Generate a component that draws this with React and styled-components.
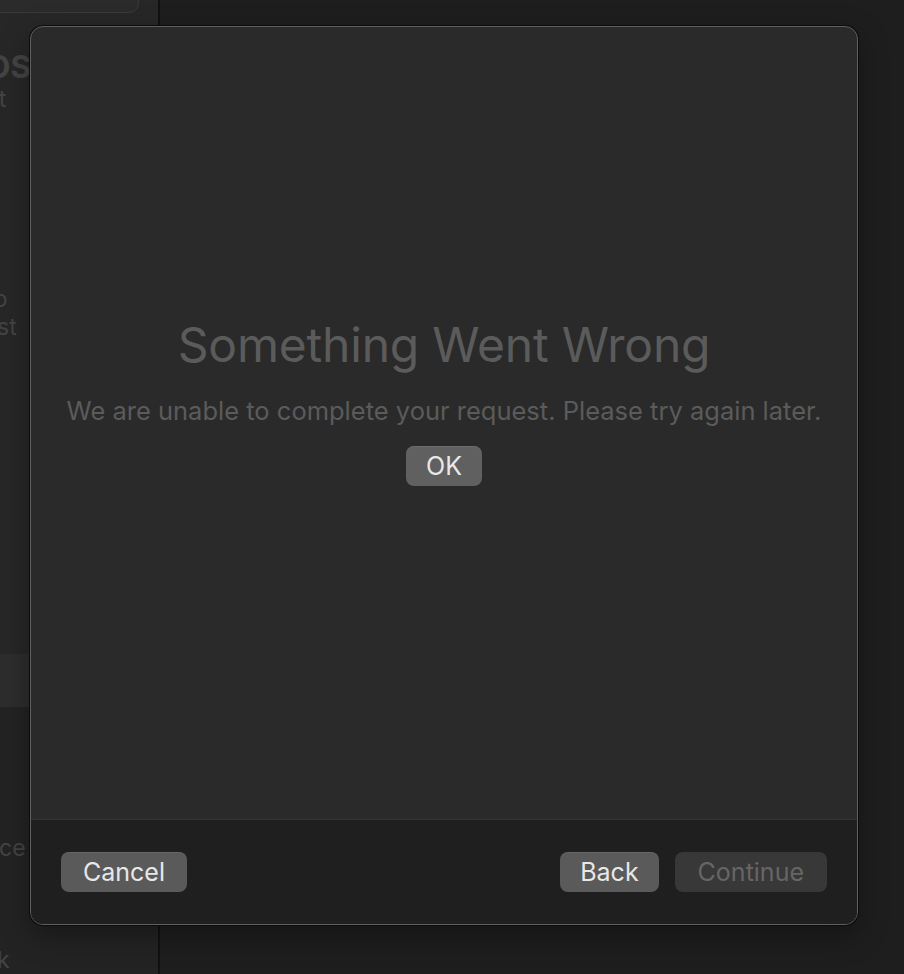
import React from 'react';
import styled, { createGlobalStyle } from 'styled-components';

const GlobalStyle = createGlobalStyle`
  html, body {
    margin: 0;
    padding: 0;
    background: #1e1e1e;
    font-family: Inter, "Noto Sans", "Liberation Sans", sans-serif;
  }
`;

const Page = styled.div`
  position: relative;
  display: flex;
  width: 904px;
  height: 974px;
  overflow: hidden;
  background: #1e1e1e;
`;

const Sidebar = styled.aside`
  display: flex;
  flex-direction: column;
  width: 158px;
  flex-shrink: 0;
  background: #272727;
  border-right: 2px solid #111111;
  overflow: hidden;
`;

const SearchField = styled.div`
  height: 34px;
  margin: -21px 19px 0 -20px;
  border: 1px solid #3a3a3a;
  border-radius: 10px;
  background: #2b2b2b;
`;

const Group = styled.div`
  display: flex;
  flex-direction: column;
  margin-top: ${props => props.top || '0'};
`;

const GroupTitle = styled.span`
  margin-left: ${props => props.shift || '0'};
  font-size: 31px;
  font-weight: 700;
  line-height: 36px;
  color: #444444;
  white-space: nowrap;
`;

const GroupLine = styled.span`
  margin-left: ${props => props.shift || '0'};
  font-size: 23px;
  line-height: 28px;
  color: #444444;
  white-space: nowrap;
`;

const SelectedRow = styled.div`
  height: 55px;
  margin-top: ${props => props.top};
  background: #2d2d2d;
`;

const LowerPane = styled.div`
  flex: 1;
  display: flex;
  flex-direction: column;
  background: #232323;
`;

const Main = styled.main`
  flex: 1;
  background: #1e1e1e;
`;

const Backdrop = styled.div`
  position: absolute;
  inset: 0;
  padding: 26px 46px 49px 30px;
  display: flex;
`;

const Sheet = styled.section`
  flex: 1;
  display: flex;
  flex-direction: column;
  border: 1.5px solid #5f5f5f;
  border-radius: 13px;
  overflow: hidden;
  background: #2a2a2a;
  box-shadow: 0 0 0 1px #0c0c0c, 0 10px 30px rgba(0, 0, 0, 0.35);
`;

const Body = styled.div`
  flex: 1;
  display: flex;
  flex-direction: column;
  align-items: center;
  padding-top: 290px;
`;

const Title = styled.h1`
  margin: 0;
  font-size: 48px;
  font-weight: 400;
  line-height: 56px;
  letter-spacing: -0.2px;
  color: #5b5b5b;
`;

const Message = styled.p`
  margin: 23px 0 0;
  font-size: 25.5px;
  line-height: 30px;
  color: #5b5b5b;
  white-space: nowrap;
`;

const Button = styled.button`
  height: 40px;
  padding: 0 ${props => props.pad || '22px'};
  border: none;
  border-radius: 8px;
  background: ${props => (props.disabled ? '#383838' : props.bright ? '#606060' : '#5a5a5a')};
  color: ${props => (props.disabled ? '#666666' : '#e8e8e8')};
  font-family: inherit;
  font-size: 25px;
  line-height: 40px;
  box-shadow: ${props => (props.disabled ? 'none' : 'inset 0 1px 0 rgba(255,255,255,0.08)')};
`;

const OkRow = styled.div`
  margin-top: 20px;
`;

const Footer = styled.footer`
  height: 105px;
  display: flex;
  align-items: center;
  justify-content: space-between;
  padding: 0 30px;
  background: #1f1f1f;
  border-top: 1.5px solid #343434;
  box-sizing: border-box;
`;

const ButtonGroup = styled.div`
  display: flex;
  gap: 16px;
`;

export default function App() {
  return (
    <>
      <GlobalStyle />
      <Page>
        <Sidebar>
          <SearchField />
          <Group top="36px">
            <GroupTitle shift="-78px">macOS</GroupTitle>
            <GroupLine shift="-76px">Current</GroupLine>
          </Group>
          <Group top="172px">
            <GroupLine shift="-64px">Add to</GroupLine>
            <GroupLine shift="-68px">Wishlist</GroupLine>
          </Group>
          <SelectedRow top="313px" />
          <LowerPane>
            <Group top="127px">
              <GroupLine shift="-49px">Device</GroupLine>
            </Group>
            <Group top="84px">
              <GroupLine shift="-44px">Back</GroupLine>
            </Group>
          </LowerPane>
        </Sidebar>
        <Main />
        <Backdrop>
          <Sheet>
            <Body>
              <Title>Something Went Wrong</Title>
              <Message>We are unable to complete your request. Please try again later.</Message>
              <OkRow>
                <Button bright pad="20px">OK</Button>
              </OkRow>
            </Body>
            <Footer>
              <Button>Cancel</Button>
              <ButtonGroup>
                <Button pad="20px">Back</Button>
                <Button disabled pad="23px">Continue</Button>
              </ButtonGroup>
            </Footer>
          </Sheet>
        </Backdrop>
      </Page>
    </>
  );
}
